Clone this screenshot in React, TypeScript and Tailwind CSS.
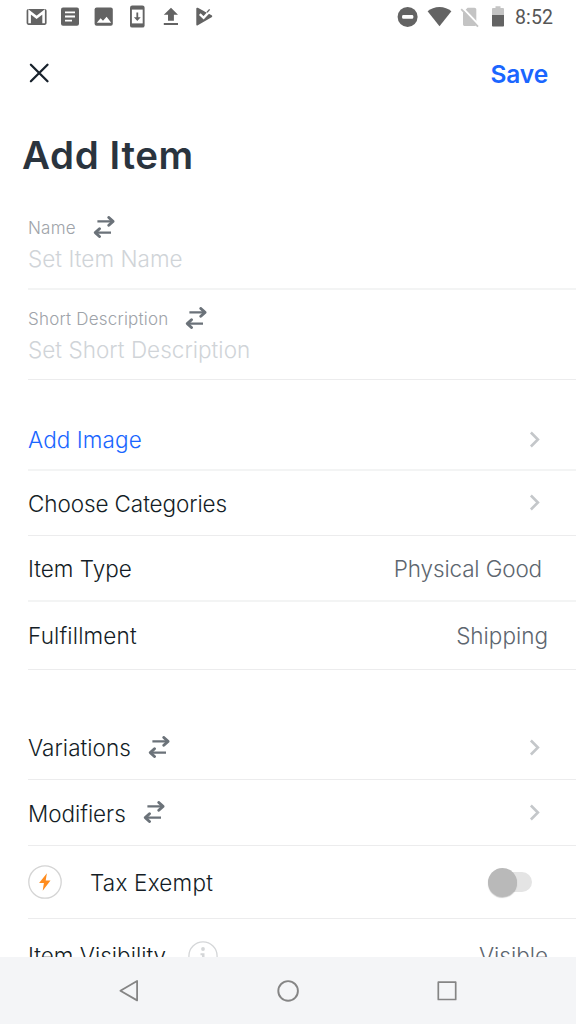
import type { ReactNode } from 'react';

const GREY = '#636363';

function StatusIcon({ w = 34, children }: { w?: number; children: ReactNode }) {
  return (
    <svg width={w} height="34" viewBox={`0 0 ${w} 34`} fill={GREY} className="shrink-0">
      {children}
    </svg>
  );
}

function StatusBar() {
  return (
    <div className="flex h-[34px] shrink-0 items-center justify-between pr-[22px] pl-6">
      <div className="flex">
        <StatusIcon>
          <rect x="2.6" y="8.9" width="20" height="16" rx="1.8" />
          <path d="M5.6 23.2V12l7 5.4 7-5.4v11.2" fill="none" stroke="#fff" strokeWidth="2.6" />
        </StatusIcon>
        <StatusIcon>
          <rect x="3" y="7.6" width="18" height="18.2" rx="2" />
          <path d="M7 12.4h10M7 16.5h10M7 20.6h7" stroke="#fff" strokeWidth="1.9" />
        </StatusIcon>
        <StatusIcon>
          <rect x="2.6" y="7.6" width="18.2" height="18.2" rx="2" />
          <path d="M4.8 22.7l3.8-4.4 2.4 2.4 3.6-4 4.6 6z" fill="#fff" />
        </StatusIcon>
        <StatusIcon>
          <rect x="4" y="5.6" width="14.6" height="22" rx="2.2" />
          <rect x="5.9" y="9.6" width="10.8" height="13.8" fill="#fff" />
          <path d="M10.4 12.4h1.8v4.8h2.5l-3.4 3.9-3.4-3.9h2.5z" />
        </StatusIcon>
        <StatusIcon>
          <path d="M11 7.8l7 7h-4.1v6H8v-6H3.8zM3.8 22.9H18v2H3.8z" />
        </StatusIcon>
        <StatusIcon>
          <path d="M3 8.6c0-.9.7-1.2 1.5-.8l13.8 7.5c.9.5.9 1.4 0 1.9L4.5 25.3c-.8.5-1.5 0-1.5-.9z" transform="translate(-0.7)" />
          <path d="M10.6 11.4L14.8 7l3.4 3-2 3.4" fill="#fff" />
          <path d="M5.8 14.2l3.8 3.6 7.6-8.2" fill="none" stroke="#fff" strokeWidth="2.4" />
          <path d="M13 12.4l2.6-3" fill="none" stroke={GREY} strokeWidth="1.4" />
        </StatusIcon>
      </div>
      <div className="flex items-center">
        <StatusIcon w={31}>
          <circle cx="11.6" cy="16.9" r="10" />
          <rect x="6.1" y="15" width="11.2" height="3.7" rx="1.2" fill="#fff" />
        </StatusIcon>
        <StatusIcon w={31}>
          <path d="M12.5 26.2L.6 11.2C3.6 8.7 8 7 12.5 7s8.9 1.7 11.9 4.2z" />
        </StatusIcon>
        <StatusIcon w={28}>
          <path d="M5 12.5L9.6 7.7h6.9c1 0 1.8.8 1.8 1.8v14.7c0 1-.8 1.8-1.8 1.8H6.8c-1 0-1.8-.8-1.8-1.8z" fill="#c4c4c4" />
          <path d="M4.2 7.5L21.5 25.5" stroke="#fff" strokeWidth="2" />
          <path d="M3.2 9.2L20 26.7" stroke="#c4c4c4" strokeWidth="1.8" />
        </StatusIcon>
        <StatusIcon w={29}>
          <path d="M9.5 6.2h5v1.7h2.4c.6 0 1.1.5 1.1 1.1v6.2H6V9c0-.6.5-1.1 1.1-1.1h2.4z" fill="#c4c4c4" />
          <path d="M6 15h12v10.4c0 .6-.5 1.1-1.1 1.1H7.1c-.6 0-1.1-.5-1.1-1.1z" />
        </StatusIcon>
        <span className="w-[39px] pt-[2px] font-[Roboto,sans-serif] text-[19.5px] leading-[34px] tracking-[0.1px] whitespace-nowrap text-[#565656]">
          8:52
        </span>
      </div>
    </div>
  );
}

function SwapIcon() {
  return (
    <svg
      width="22"
      height="22"
      viewBox="0 0 22 22"
      fill="none"
      stroke="#6b7279"
      strokeWidth="2.4"
      strokeLinejoin="round"
      className="shrink-0"
    >
      <path d="M4.4 5.4h15.8M18 16.6H2.2" />
      <path d="M15.8 1.5l4.2 3.9-4.2 3.9M6.5 12.7l-4.2 3.9 4.2 3.9" strokeWidth="2.9" strokeLinecap="round" />
    </svg>
  );
}

function Chevron() {
  return (
    <svg width="12" height="18" viewBox="0 0 12 18" fill="none" stroke="#c4c7ca" strokeWidth="2.6" className="mr-[35px]">
      <path d="M1.9 1.5l7 7-7 7" />
    </svg>
  );
}

function Field({ label, placeholder, className }: { label: string; placeholder: string; className: string }) {
  return (
    <div className={`flex shrink-0 flex-col ${className}`}>
      <div className="flex h-[22px] items-center gap-[17px] text-[17px] font-light text-[#9ea3a9]">
        <span className="pt-[3px] tracking-[0.2px]">{label}</span>
        <SwapIcon />
      </div>
      <span className="mt-[6px] h-[30px] text-[22.5px] leading-[30px] font-[350] tracking-[0.03px] text-[#d0d4d8]">
        {placeholder}
      </span>
    </div>
  );
}

function Row({ children, className, right }: { children: ReactNode; className: string; right?: ReactNode }) {
  return (
    <div className={`flex shrink-0 items-center justify-between text-[22.5px] leading-[30px] font-[350] ${className}`}>
      <div className="flex items-center">{children}</div>
      {right}
    </div>
  );
}

export default function App() {
  return (
    <div className="flex h-[1024px] w-[576px] flex-col overflow-hidden bg-white font-['Inter',sans-serif] text-[#141d26]">
      <StatusBar />
      <header className="flex h-[78px] shrink-0 items-center justify-between pr-[28px] pl-[29px]">
        <svg width="21" height="21" viewBox="0 0 21 21" fill="none" stroke="#18222c" strokeWidth="2.3" strokeLinecap="round">
          <path d="M1.9 1.7l16.6 16.6M18.5 1.7L1.9 18.3" />
        </svg>
        <button className="pt-[2px] text-[24.5px] leading-[30px] font-[580] tracking-[-0.15px] text-[#1a66ff]">Save</button>
      </header>
      <h1 className="h-[86px] shrink-0 pl-[22px] text-[38.5px] leading-[86px] font-[560] tracking-[0.6px] text-[#2a343e]">
        Add Item
      </h1>
      <main className="flex min-h-0 flex-1 flex-col overflow-hidden pl-[28px]">
        <Field label="Name" placeholder="Set Item Name" className="h-[92px] border-b-2 border-[#f3f4f4] pt-[18px]" />
        <Field label="Short Description" placeholder="Set Short Description" className="h-[90px] border-b border-[#ececed] pt-[17px]" />
        <Row className="mt-[30px] h-[61px] border-b-2 border-[#f3f4f4] text-[#1a66ff]" right={<Chevron />}>
          <span className="tracking-[0.1px]">Add Image</span>
        </Row>
        <Row className="h-[65px] border-b border-[#ececed]" right={<Chevron />}>
          <span className="pt-[2px] tracking-[-0.1px]">Choose Categories</span>
        </Row>
        <Row
          className="h-[66px] border-b-2 border-[#f3f4f4] pt-[2px]"
          right={<span className="mr-[34px] tracking-[-0.15px] text-[#5d666f]">Physical Good</span>}
        >
          Item Type
        </Row>
        <Row className="h-[68px] border-b border-[#ececed]" right={<span className="mr-[28px] text-[#5d666f]">Shipping</span>}>
          <span className="tracking-[0.15px]">Fulfillment</span>
        </Row>
        <Row className="mt-[46px] h-[64px] border-b border-[#ececed]" right={<Chevron />}>
          <span className="mr-[17px] tracking-[0.05px]">Variations</span>
          <span className="pb-[2px]">
            <SwapIcon />
          </span>
        </Row>
        <Row className="h-[66px] border-b border-[#ececed]" right={<Chevron />}>
          <span className="mr-[17px] pt-[2px] tracking-[-0.05px]">Modifiers</span>
          <span className="pb-[2px]">
            <SwapIcon />
          </span>
        </Row>
        <Row
          className="h-[73px] border-b border-[#ececed]"
          right={
            <div className="mr-[44px] flex items-center">
              <span className="z-10 size-[29px] rounded-full bg-[#b9b9b9] shadow-[0_1px_1px_rgba(0,0,0,0.2)]" />
              <span className="-ml-[16px] h-[20px] w-[31px] rounded-full bg-[#e4e4e4]" />
            </div>
          }
        >
          <svg width="34" height="34" viewBox="0 0 34 34" className="mr-[28px]">
            <circle cx="17" cy="17" r="16.2" fill="none" stroke="#d4d4d4" strokeWidth="1.3" />
            <path d="M18.9 8.2l-7.8 9.9h4.8l-1.2 7.7 7.8-10.4h-4.8z" fill="#ff8c1e" />
          </svg>
          <span className="pt-[2px] tracking-[0.2px]">Tax Exempt</span>
        </Row>
        <Row className="h-[76px] pb-[2px]" right={<span className="mr-[28px] text-[#5d666f]">Visible</span>}>
          <span className="mr-[22px]">Item Visibility</span>
          <svg width="30" height="30" viewBox="0 0 30 30">
            <circle cx="15" cy="15" r="14.1" fill="none" stroke="#d4d6d8" strokeWidth="1.3" />
            <circle cx="15" cy="8" r="1.9" fill="#d4d6d8" />
            <path d="M12.5 12.2h4v10H14v-8h-1.5z" fill="#d4d6d8" />
          </svg>
        </Row>
      </main>
      <nav className="flex h-[67px] shrink-0 items-center justify-between bg-[#f4f5f7] px-[116px]">
        <svg width="26" height="26" viewBox="0 0 26 26" fill="none" stroke="#858585" strokeWidth="1.8" strokeLinejoin="round">
          <path d="M21.1 3v19.4L4.4 12.8z" />
        </svg>
        <svg width="26" height="26" viewBox="0 0 26 26" fill="none" stroke="#858585" strokeWidth="1.9">
          <circle cx="13.1" cy="12.9" r="9.8" />
        </svg>
        <svg width="26" height="26" viewBox="0 0 26 26" fill="none" stroke="#858585" strokeWidth="1.7" strokeLinejoin="round">
          <rect x="4.3" y="4.2" width="17.4" height="17.3" />
        </svg>
      </nav>
    </div>
  );
}
